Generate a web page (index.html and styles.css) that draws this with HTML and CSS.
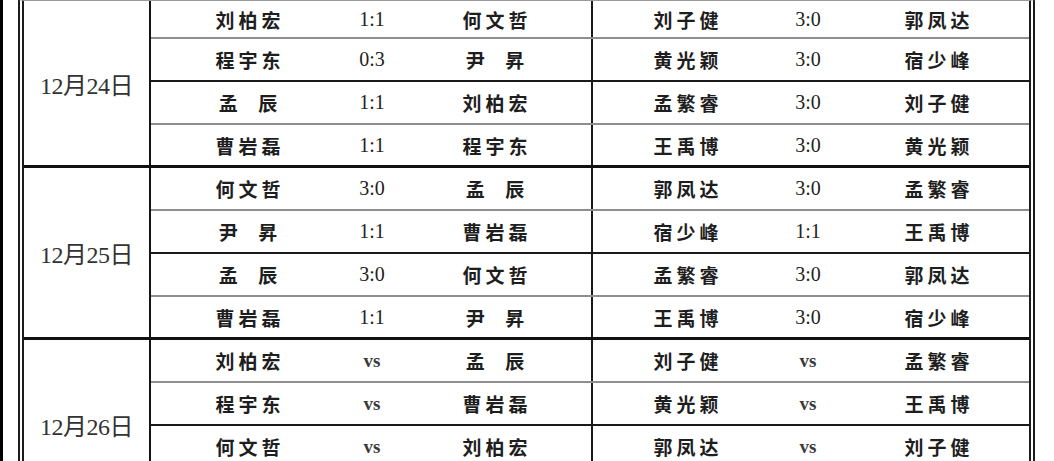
FILE: index.html
```html
<!DOCTYPE html>
<html lang="zh">
<head>
<meta charset="utf-8">
<title>赛程</title>
<link rel="stylesheet" href="styles.css">
</head>
<body>
<div class="page">
  <div class="table">
    <div class="group">
      <div class="date">12月24日</div>
      <div class="rows">
        <div class="row first">
          <div class="half">
            <div class="name">刘柏宏</div><div class="score">1:1</div><div class="name">何文哲</div>
          </div>
          <div class="half right">
            <div class="name">刘子健</div><div class="score">3:0</div><div class="name last">郭凤达</div>
          </div>
        </div>
        <div class="row mid">
          <div class="half">
            <div class="name">程宇东</div><div class="score">0:3</div><div class="name two">尹 昇</div>
          </div>
          <div class="half right">
            <div class="name">黄光颖</div><div class="score">3:0</div><div class="name last">宿少峰</div>
          </div>
        </div>
        <div class="row">
          <div class="half">
            <div class="name two">孟 辰</div><div class="score">1:1</div><div class="name">刘柏宏</div>
          </div>
          <div class="half right">
            <div class="name">孟繁睿</div><div class="score">3:0</div><div class="name last">刘子健</div>
          </div>
        </div>
        <div class="row end">
          <div class="half">
            <div class="name">曹岩磊</div><div class="score">1:1</div><div class="name">程宇东</div>
          </div>
          <div class="half right">
            <div class="name">王禹博</div><div class="score">3:0</div><div class="name last">黄光颖</div>
          </div>
        </div>
      </div>
    </div>

    <div class="group">
      <div class="date">12月25日</div>
      <div class="rows">
        <div class="row">
          <div class="half">
            <div class="name">何文哲</div><div class="score">3:0</div><div class="name two">孟 辰</div>
          </div>
          <div class="half right">
            <div class="name">郭凤达</div><div class="score">3:0</div><div class="name last">孟繁睿</div>
          </div>
        </div>
        <div class="row mid">
          <div class="half">
            <div class="name two">尹 昇</div><div class="score">1:1</div><div class="name">曹岩磊</div>
          </div>
          <div class="half right">
            <div class="name">宿少峰</div><div class="score">1:1</div><div class="name last">王禹博</div>
          </div>
        </div>
        <div class="row">
          <div class="half">
            <div class="name two">孟 辰</div><div class="score">3:0</div><div class="name">何文哲</div>
          </div>
          <div class="half right">
            <div class="name">孟繁睿</div><div class="score">3:0</div><div class="name last">郭凤达</div>
          </div>
        </div>
        <div class="row end">
          <div class="half">
            <div class="name">曹岩磊</div><div class="score">1:1</div><div class="name two">尹 昇</div>
          </div>
          <div class="half right">
            <div class="name">王禹博</div><div class="score">3:0</div><div class="name last">宿少峰</div>
          </div>
        </div>
      </div>
    </div>

    <div class="group">
      <div class="date">12月26日</div>
      <div class="rows">
        <div class="row">
          <div class="half">
            <div class="name">刘柏宏</div><div class="score vs">vs</div><div class="name two">孟 辰</div>
          </div>
          <div class="half right">
            <div class="name">刘子健</div><div class="score vs">vs</div><div class="name last">孟繁睿</div>
          </div>
        </div>
        <div class="row mid">
          <div class="half">
            <div class="name">程宇东</div><div class="score vs">vs</div><div class="name">曹岩磊</div>
          </div>
          <div class="half right">
            <div class="name">黄光颖</div><div class="score vs">vs</div><div class="name last">王禹博</div>
          </div>
        </div>
        <div class="row">
          <div class="half">
            <div class="name">何文哲</div><div class="score vs">vs</div><div class="name">刘柏宏</div>
          </div>
          <div class="half right">
            <div class="name">郭凤达</div><div class="score vs">vs</div><div class="name last">刘子健</div>
          </div>
        </div>
        <div class="row end">
          <div class="half"></div>
          <div class="half right"></div>
        </div>
      </div>
    </div>
  </div>
</div>
</body>
</html>
```

FILE: styles.css
```css
html, body {
  margin: 0;
  padding: 0;
  background: #ffffff;
}

body {
  width: 1054px;
  height: 461px;
  overflow: hidden;
}

.page {
  box-sizing: border-box;
  height: 461px;
  border-left: 3px solid #000000;
  padding-left: 15px;
  overflow: hidden;
}

.table {
  width: 1017px;
  box-sizing: border-box;
  border-left: 6px double #1c1c1c;
  border-right: 6px double #1c1c1c;
  border-top: 1px solid #9a9a9a;
  display: flex;
  flex-direction: column;
}

.group {
  display: flex;
  border-bottom: 3px solid #111111;
}

.date {
  width: 125px;
  flex: none;
  border-right: 2px solid #151515;
  display: flex;
  align-items: center;
  justify-content: center;
  font-family: "Liberation Serif", "Noto Sans CJK SC", serif;
  font-size: 24px;
  color: #333333;
  letter-spacing: -0.5px;
}

.rows {
  flex: 1;
  display: flex;
  flex-direction: column;
}

.row {
  display: flex;
  height: 43px;
  box-sizing: border-box;
  border-bottom: 2px solid #8e8e8e;
}

.row.first {
  height: 38px;
}

.row.mid {
  border-bottom: 2px solid #1a1a1a;
}

.row.end {
  height: 40px;
  border-bottom: none;
}

.half {
  width: 440px;
  display: grid;
  grid-template-columns: 194px 54px 192px;
  border-right: 2px solid #1a1a1a;
}

.half.right {
  width: 436px;
  grid-template-columns: 186px 58px 192px;
  border-right: none;
}

.name, .score {
  display: flex;
  align-items: center;
  justify-content: center;
}

.name {
  font-family: "Noto Sans CJK SC", sans-serif;
  font-weight: 700;
  font-size: 19px;
  color: #1e1e1e;
  letter-spacing: 4px;
  padding-left: 4px;
}

.name.two {
  word-spacing: 8px;
}

.name.last {
  padding-left: 12px;
}

.score {
  font-family: "Liberation Serif", serif;
  font-size: 20px;
  color: #222222;
}

.score.vs {
  font-size: 19px;
  font-weight: 700;
  color: #3a3a3a;
}
```
